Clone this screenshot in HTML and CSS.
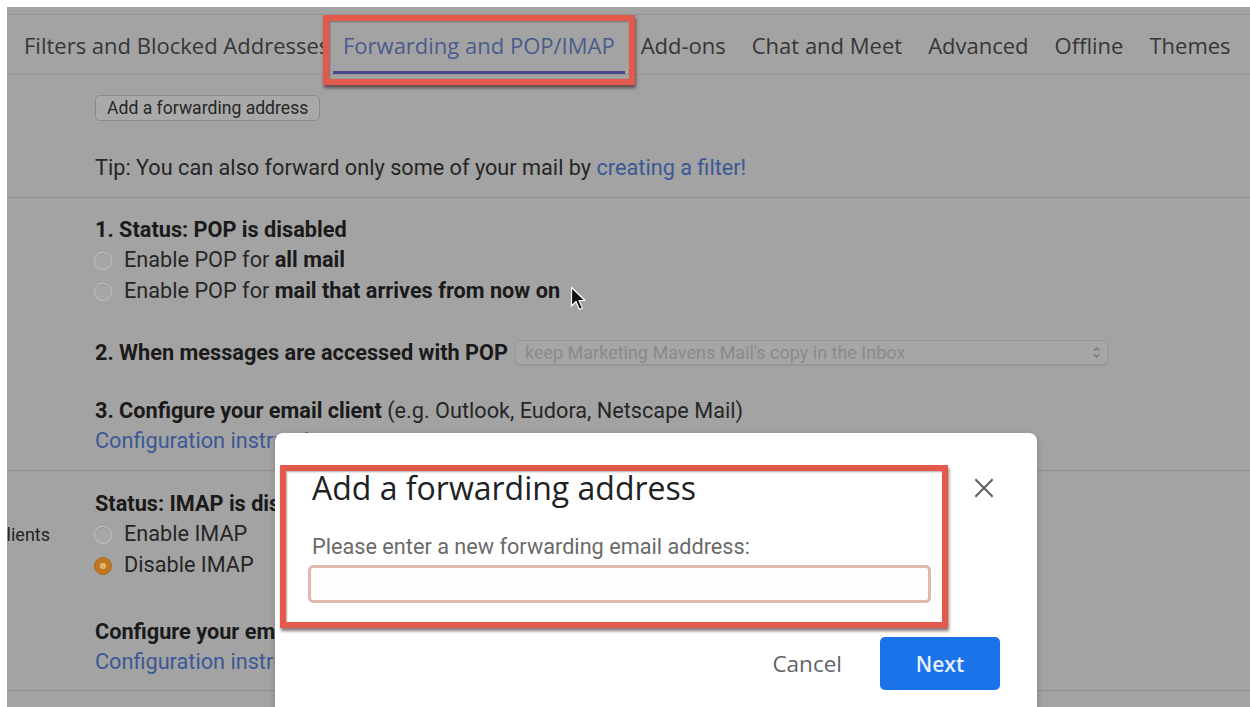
FILE: index.html
```html
<!DOCTYPE html>
<html lang="en">
<head>
<meta charset="utf-8">
<title>Settings – Forwarding and POP/IMAP</title>
<link rel="stylesheet" href="styles.css">
</head>
<body>
<div class="page">
  <nav class="tabs">
    <a class="tab tab-first">Filters and Blocked Addresses</a>
    <a class="tab active">Forwarding and POP/IMAP</a>
    <a class="tab">Add-ons</a>
    <a class="tab">Chat and Meet</a>
    <a class="tab">Advanced</a>
    <a class="tab">Offline</a>
    <a class="tab">Themes</a>
  </nav>

  <section class="row row-forward">
    <div class="label"></div>
    <div class="body">
      <button class="mac-btn">Add a forwarding address</button>
      <p class="tip">Tip: You can also forward only some of your mail by <a class="link">creating a filter!</a></p>
    </div>
  </section>

  <section class="row row-pop">
    <div class="label"></div>
    <div class="body">
      <div class="line"><b>1. Status: POP is disabled</b></div>
      <label class="radio-line"><span class="radio"></span><span>Enable POP for <b>all mail</b></span></label>
      <label class="radio-line"><span class="radio"></span><span>Enable POP for <b>mail that arrives from now on</b></span></label>
      <div class="line gap-when"><b>2. When messages are accessed with POP</b><span class="select"><span>keep Marketing Mavens Mail's copy in the Inbox</span><svg class="chev" viewBox="0 0 10 14" width="9" height="13"><path d="M2 5 L5 2 L8 5 M2 9 L5 12 L8 9" fill="none" stroke="#6e6e6e" stroke-width="1.3"/></svg></span></div>
      <div class="line gap-config"><b>3. Configure your email client</b> (e.g. Outlook, Eudora, Netscape Mail)</div>
      <div class="line"><a class="link">Configuration instructions</a></div>
    </div>
  </section>

  <section class="row row-imap">
    <div class="label">
      <div class="label-inner">
        <div class="label-line-right">clients</div>
      </div>
    </div>
    <div class="body">
      <div class="line"><b>Status: IMAP is disabled</b></div>
      <label class="radio-line"><span class="radio"></span><span>Enable IMAP</span></label>
      <label class="radio-line"><span class="radio checked"></span><span>Disable IMAP</span></label>
      <div class="line gap-client"><b>Configure your email client</b> (e.g. Outlook, Thunderbird, iPhone)</div>
      <div class="line"><a class="link">Configuration instructions</a></div>
    </div>
  </section>

  <section class="row row-rest"></section>
</div>

<div class="dialog">
  <div class="dialog-head">
    <h2 class="dialog-title">Add a forwarding address</h2>
    <button class="close" aria-label="Close">
      <svg viewBox="0 0 24 24" width="26" height="26"><path d="M4 4 L20 20 M20 4 L4 20" stroke="#5f6368" stroke-width="2" fill="none"/></svg>
    </button>
  </div>
  <p class="dialog-label">Please enter a new forwarding email address:</p>
  <input class="dialog-input" type="text">
  <div class="dialog-actions">
    <button class="btn-text">Cancel</button>
    <button class="btn-primary">Next</button>
  </div>
  <div class="mark mark-dialog"></div>
</div>

<div class="mark mark-tab"></div>

<svg class="pointer" viewBox="0 0 16 26" width="16" height="26">
  <path d="M1.5 1.5 L1.5 20 L6 15.5 L9.5 23.5 L12.5 22 L9 14.5 L15 14.5 Z" fill="#111" stroke="#fff" stroke-width="1.2" stroke-linejoin="round"/>
</svg>
</body>
</html>
```

FILE: styles.css
```css
* { box-sizing: border-box; }

html, body {
  margin: 0;
  height: 100%;
}

body {
  background: #ffffff;
  font-family: Roboto, "Liberation Sans", sans-serif;
  overflow: hidden;
  position: relative;
}

/* dimmed settings page behind the modal */
.page {
  margin: 7px 0 0 7px;
  padding-top: 7px;
  height: 720px;
  background: #a3a3a3;
}

.tabs {
  display: flex;
  gap: 6px;
  height: 61px;
  padding-left: 7px;
  border-top: 1px solid #959595;
  border-bottom: 1px solid #959595;
}

.tab {
  display: flex;
  align-items: center;
  flex: none;
  padding: 3px 10px 0;
  font-family: "Open Sans", sans-serif;
  font-size: 22px;
  color: #363636;
  white-space: nowrap;
  border-bottom: 3px solid transparent;
}

.tab-first {
  width: 313px;
  padding-right: 0;
  overflow: hidden;
}

.tab.active {
  color: #4a5c8c;
  border-bottom-color: #4b4888;
}

.row {
  display: flex;
  border-bottom: 1px solid #8f8f8f;
}

.label {
  width: 88px;
  flex: none;
  overflow: hidden;
  font-size: 18px;
  line-height: 30px;
  color: #222222;
}

.row-imap .label-inner { padding-top: 49px; }

.label-line-right {
  display: flex;
  justify-content: flex-end;
  padding-right: 45px;
  white-space: nowrap;
}

.body {
  flex: 1;
  font-size: 21.7px;
  line-height: 30px;
  color: #262626;
  white-space: nowrap;
}

.body b {
  color: #1a1a1a;
  font-weight: 700;
}

.row-forward .body { padding: 20px 0 14px; }
.row-pop .body { padding: 17px 0 14px; }
.row-imap .body { padding: 18px 0 13px; }
.row-rest { border-bottom: 0; height: 40px; }

.mac-btn {
  display: block;
  height: 26px;
  padding: 0 11px;
  font-family: Roboto, sans-serif;
  font-size: 17.6px;
  color: #262626;
  background: #a9a9a9;
  border: 1px solid #8a8a8a;
  border-radius: 5px;
}

.tip {
  margin: 32px 0 0;
}

.link {
  color: #3c5896;
}

.line { display: block; }

.radio-line {
  display: block;
}

.radio-line + .radio-line { margin-top: 1px; }

.radio {
  display: inline-block;
  width: 18px;
  height: 18px;
  margin: 0 12px 0 -1px;
  vertical-align: -3px;
  border-radius: 50%;
  border: 1.5px solid #c2c2c2;
  background: #a7a7a7;
  box-shadow: inset 0 1px 1px rgba(0, 0, 0, 0.15);
}

.radio.checked {
  background: radial-gradient(circle, #e0b467 0 3px, #c07722 3.5px);
  border: 1px solid #a8681e;
  box-shadow: none;
}

.gap-when { margin-top: 32px; }
.gap-config { margin-top: 28px; }
.gap-client { margin-top: 37px; }

.select {
  display: inline-flex;
  align-items: center;
  justify-content: space-between;
  vertical-align: 1px;
  width: 593px;
  height: 25px;
  margin-left: 7px;
  padding: 0 6px 0 9px;
  font-size: 18px;
  line-height: 23px;
  color: #8a8a8a;
  background: #a6a6a6;
  border: 1px solid #979797;
  border-radius: 5px;
  box-shadow: 0 1px 1px rgba(0, 0, 0, 0.08);
}

/* modal */
.dialog {
  position: absolute;
  left: 275px;
  top: 433px;
  width: 762px;
  height: 300px;
  padding: 37px 37px 0;
  background: #ffffff;
  border-radius: 8px 8px 0 0;
  box-shadow: 0 2px 6px rgba(0, 0, 0, 0.2);
}

.dialog-head {
  display: flex;
  align-items: center;
  justify-content: space-between;
}

.dialog-title {
  margin: 0;
  font-family: "Open Sans", sans-serif;
  font-weight: 400;
  font-size: 32px;
  line-height: 36px;
  color: #202124;
}

.close {
  width: 26px;
  height: 26px;
  margin-right: 3px;
  padding: 0;
  border: 0;
  background: none;
}

.close svg { display: block; }

.dialog-label {
  margin: 29px 0 0;
  font-size: 21.7px;
  line-height: 24px;
  color: #6a6a6a;
}

.dialog-input {
  display: block;
  width: 623px;
  height: 38px;
  margin: 6px 0 0 -4px;
  border: 3px solid #dcbcaa;
  border-radius: 5px;
  background: #fffdfb;
}

.dialog-actions {
  display: flex;
  justify-content: flex-end;
  gap: 18px;
  margin-top: 34px;
}

.btn-text,
.btn-primary {
  height: 53px;
  font-family: "Open Sans", sans-serif;
  border: 0;
  border-radius: 5px;
}

.btn-text {
  padding: 0 20px;
  font-size: 22.5px;
  color: #5f6368;
  background: none;
}

.btn-primary {
  width: 120px;
  font-size: 21px;
  font-weight: 600;
  color: #e8f0fe;
  background: #1a73e8;
}

/* red highlight frames */
.mark {
  position: absolute;
  border: 6px solid #e3594b;
  box-shadow: 1px 3px 3px rgba(40, 10, 10, 0.55), inset 1px 1px 2px rgba(40, 10, 10, 0.35);
  pointer-events: none;
}

.mark-tab {
  left: 323px;
  top: 15px;
  width: 312px;
  height: 70px;
}

.mark-dialog {
  left: 5px;
  top: 32px;
  width: 668px;
  height: 163px;
}

.pointer {
  position: absolute;
  left: 570px;
  top: 286px;
}
```
